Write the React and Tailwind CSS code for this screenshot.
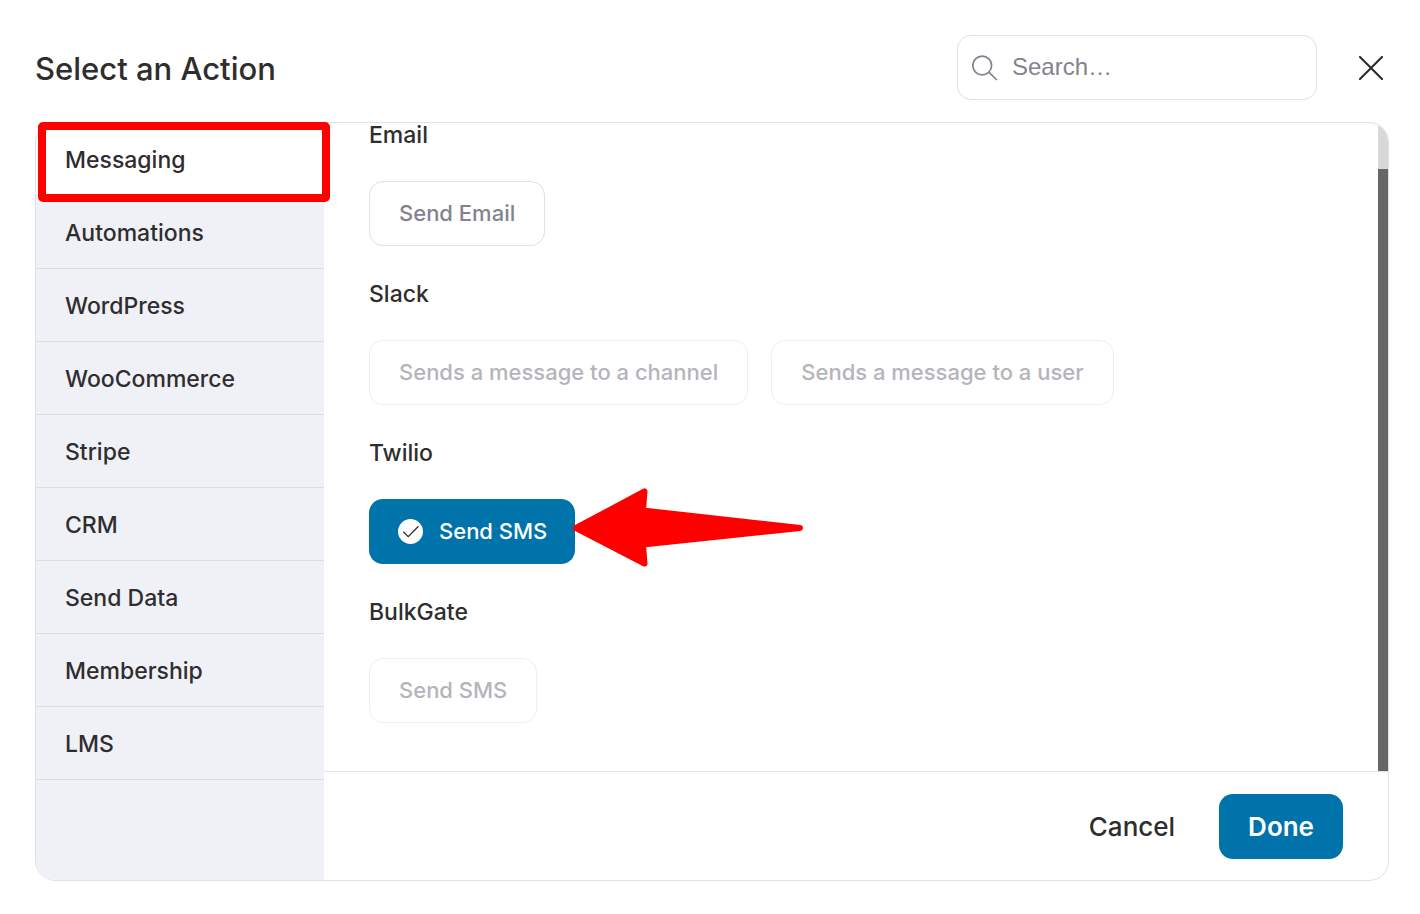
import { useState } from "react";

const categories = [
  "Messaging",
  "Automations",
  "WordPress",
  "WooCommerce",
  "Stripe",
  "CRM",
  "Send Data",
  "Membership",
  "LMS",
];

const groups = [
  { name: "Email", actions: [{ label: "Send Email" }] },
  {
    name: "Slack",
    actions: [
      { label: "Sends a message to a channel", disabled: true },
      { label: "Sends a message to a user", disabled: true },
    ],
  },
  { name: "Twilio", actions: [{ label: "Send SMS", selected: true }] },
  { name: "BulkGate", actions: [{ label: "Send SMS", disabled: true }] },
];

function SearchIcon() {
  return (
    <svg className="size-[26px] shrink-0" viewBox="0 0 26 26" fill="none" stroke="#84828f" strokeWidth="1.7" aria-hidden="true">
      <circle cx="10.2" cy="10.5" r="9.4" />
      <path d="M16.9 17.200 24.800 25" />
    </svg>
  );
}

function CloseIcon() {
  return (
    <svg className="size-6" viewBox="0 0 24 24" fill="none" stroke="#2c2a2b" strokeWidth="2.1" strokeLinecap="round" aria-hidden="true">
      <path d="M1 1 23 23M23 1 1 23" />
    </svg>
  );
}

function CheckIcon() {
  return (
    <svg className="size-[25px] shrink-0" viewBox="0 0 26 26" fill="none" aria-hidden="true">
      <circle cx="13" cy="13" r="13" fill="#fff" />
      <path d="M5.5 13.3 10.6 18.3 21.3 7.6" stroke="#2c2a2b" strokeWidth="1.3" />
    </svg>
  );
}

function Arrow() {
  return (
    <svg className="pointer-events-none absolute top-1/2 left-full -mt-11 -ml-0.5 h-20 w-[232px]" viewBox="0 0 232 80" aria-hidden="true">
      <path
        d="M3 40 71.500 3.500 70 22.500 227 40 70 56.500 71.500 75.500Z"
        fill="#f00"
        stroke="#f00"
        strokeWidth="6"
        strokeLinejoin="round"
      />
    </svg>
  );
}

const baseButton = "flex h-[65px] items-center gap-4 rounded-[14px] text-[22px] font-medium whitespace-nowrap";

function ActionButton({ label, disabled, selected }) {
  if (selected) {
    return (
      <div className="relative">
        <button type="button" aria-pressed="true" className={`${baseButton} bg-[#0073aa] pr-7 pl-[29px] text-white`}>
          <CheckIcon />
          {label}
        </button>
        <Arrow />
      </div>
    );
  }
  return (
    <button
      type="button"
      disabled={disabled}
      className={`${baseButton} border px-[29px] ${
        disabled ? "border-[#eeedf4] text-[#b5b4bb]" : "border-[#e0dfeb] text-[#84828f]"
      }`}
    >
      {label}
    </button>
  );
}

export default function App() {
  const [active, setActive] = useState("Messaging");

  return (
    <main className="flex min-h-screen flex-col bg-white pt-[35px] pr-[31px] pb-[33px] pl-[35px] font-['Inter',sans-serif] text-[#2f2d2e]">
      <header className="flex items-center pr-[6px]">
        <h1 className="pt-[3px] text-[31px] font-medium">Select an Action</h1>
        <label className="ml-auto flex h-[65px] w-[360px] items-center gap-[14px] rounded-[14px] border border-[#e0dfeb] px-[14px]">
          <SearchIcon />
          <input
            type="search"
            aria-label="Search"
            placeholder="Search…"
            className="min-w-0 flex-1 bg-transparent pb-0.5 font-['Liberation_Sans',sans-serif] text-[24px] outline-none placeholder:text-[#84828f]"
          />
        </label>
        <button type="button" aria-label="Close" className="ml-[42px]">
          <CloseIcon />
        </button>
      </header>

      <div className="relative mt-[22px] flex flex-1">
        <div className="flex flex-1 rounded-[20px] border border-[#e0dfeb]">
          <nav className="w-72 shrink-0 overflow-hidden rounded-l-[19px] bg-[#f0f1f7]">
            {categories.map((name) => (
              <button
                key={name}
                type="button"
                onClick={() => setActive(name)}
                className={`block h-[73px] w-full border-b border-[#dcdce8] px-[29px] pt-0.5 text-left text-[23px] font-medium ${
                  name === active ? "bg-white" : ""
                }`}
              >
                {name}
              </button>
            ))}
          </nav>

          <div className="flex min-w-0 flex-1 flex-col">
            <div className="flex flex-1">
              <div className="flex flex-1 flex-col gap-9 px-[45px]">
                {groups.map((group) => (
                  <section key={group.name} className="flex flex-col gap-[34px]">
                    <h2 className="text-[23px] leading-6 font-medium">{group.name}</h2>
                    <div className="flex gap-[23px]">
                      {group.actions.map((action) => (
                        <ActionButton key={action.label} {...action} />
                      ))}
                    </div>
                  </section>
                ))}
              </div>
              <div className="flex w-5 justify-end overflow-hidden rounded-tr-[19px]">
                <div className="flex w-[10px] flex-col bg-[#d8d8d8] pt-[46px]">
                  <div className="flex-1 bg-[#666]" />
                </div>
              </div>
            </div>

            <footer className="flex h-[109px] items-center justify-end gap-11 border-t border-[#e0dfeb] pr-[45px] text-[26px] font-medium">
              <button type="button">Cancel</button>
              <button type="button" className="h-[65px] rounded-[14px] bg-[#0073aa] px-[29px] font-semibold text-white">
                Done
              </button>
            </footer>
          </div>
        </div>
        <div className="pointer-events-none absolute top-0 left-[3px] h-20 w-[292px] rounded-[5px] border-8 border-[#f00]" />
      </div>
    </main>
  );
}
